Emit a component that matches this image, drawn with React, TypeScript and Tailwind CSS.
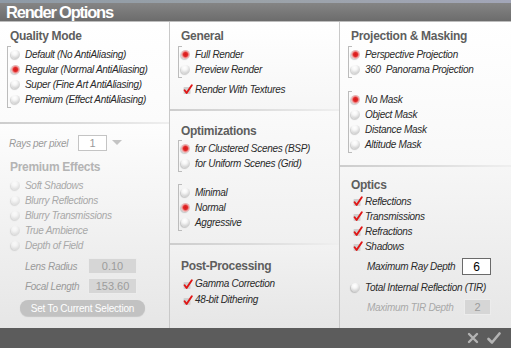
import React from "react";

const FONT = "font-['Liberation_Sans','Arial',sans-serif]";

function Radio({ on, dim }: { on?: boolean; dim?: boolean }) {
  return (
    <span
      className={`inline-block w-[9px] h-[9px] rounded-full shrink-0 shadow-[-1px_1px_1px_rgba(0,0,0,0.18)] ${
        on
          ? "bg-[radial-gradient(circle_at_50%_50%,#d81818_0,#e02828_32%,#f0a8a8_55%,#cfcfcf_85%,#b0b0b0_100%)]"
          : "bg-[radial-gradient(circle_at_40%_30%,#ffffff_0,#f6f6f6_30%,#c8c8c8_80%,#a8a8a8_100%)]"
      } ${dim ? "opacity-60" : ""}`}
    />
  );
}

function Check() {
  return (
    <svg width="10" height="11" viewBox="0 0 10 11" className="shrink-0">
      <rect x="0.5" y="3" width="7" height="7" rx="1" fill="#cfcfcf" />
      <path d="M1.6 6.3 L3.6 9 L8.8 1.2" stroke="#e01616" strokeWidth="1.9" fill="none" strokeLinecap="round" strokeLinejoin="round" />
    </svg>
  );
}

function Item({ children, on, check, dim, h = "h-[15px]" }: { children: React.ReactNode; on?: boolean; check?: boolean; dim?: boolean; h?: string }) {
  return (
    <div className={`flex items-center ${h} ${check ? "gap-[2px]" : "gap-[5px]"}`}>
      {check ? <Check /> : <Radio on={on} dim={dim} />}
      <span className={`italic text-[10px] tracking-[-0.3px] whitespace-nowrap leading-none ${dim ? "text-[#a8a8a8]" : "text-[#2a2a2a]"}`}>{children}</span>
    </div>
  );
}

function Group({ children, className = "" }: { children: React.ReactNode; className?: string }) {
  return (
    <div className={`relative border-l border-[#bcbcbc] py-[1px] pl-[2px] ${className}`}>
      <span className="absolute left-0 top-0 w-[3px] h-px bg-[#bcbcbc]" />
      <span className="absolute left-0 bottom-0 w-[3px] h-px bg-[#bcbcbc]" />
      {children}
    </div>
  );
}

function Heading({ children, dim, className = "" }: { children: React.ReactNode; dim?: boolean; className?: string }) {
  return (
    <div className={`h-[16px] leading-[16px] font-bold text-[12px] tracking-[-0.3px] whitespace-nowrap ${dim ? "text-[#b4b4b4]" : "text-[#5e5e5e]"} ${className}`}>
      {children}
    </div>
  );
}

function Sep() {
  return <div className="h-[2px] bg-linear-to-r from-[#cdcdcd] via-[#dcdcdc] to-transparent" />;
}

export default function App() {
  return (
    <div className={`${FONT} w-[511px] h-[348px] flex flex-col overflow-hidden bg-[#efefef]`}>
      {/* Title bar */}
      <div className="h-[22px] flex flex-col shrink-0">
        <div className="h-[3px] bg-linear-to-r from-[#8e9aa6] via-[#9ba2a8] to-[#a2a6b8]" />
        <div className="flex-1 flex items-center pl-[6px] bg-linear-to-b from-[#858585] to-[#6c6c6c] border-b border-[#bdbdbd]">
          <span className="text-white font-bold text-[16.5px] tracking-[-1.2px] leading-none">Render Options</span>
        </div>
      </div>

      {/* Body */}
      <div className="flex-1 flex min-h-0">
        {/* Left column */}
        <div className="w-[169px] flex flex-col shrink-0">
          <div className="h-[100px] pt-[6px] bg-linear-to-b from-white to-[#fbfbfb]">
            <Heading className="pl-[10px]">Quality Mode</Heading>
            <Group className="mt-[2px] ml-[7px] pl-[3px]">
              <Item>Default (No AntiAliasing)</Item>
              <Item on>Regular (Normal AntiAliasing)</Item>
              <Item>Super (Fine Art AntiAliasing)</Item>
              <Item>Premium (Effect AntiAliasing)</Item>
            </Group>
          </div>
          <Sep />
          <div className="flex-1 bg-linear-to-b from-[#fdfdfd] to-[#e6e6e6]">
            <div className="mt-[11px] h-[16px] flex items-center pl-[9px]">
              <span className="italic text-[10px] tracking-[-0.3px] text-[#9a9a9a] w-[69px]">Rays per pixel</span>
              <div className="w-[29px] h-[16px] bg-white border border-[#c4c4c4] flex items-center justify-center text-[11px] text-[#9a9a9a]">1</div>
              <svg width="10" height="6" viewBox="0 0 10 6" className="ml-[5px]">
                <path d="M0 0 L10 0 L5 5 Z" fill="#c4c4c4" />
              </svg>
            </div>
            <Heading dim className="pl-[10px] mt-[8px]">Premium Effects</Heading>
            <div className="mt-[3px] pl-[11px]">
              <Item dim>Soft Shadows</Item>
              <Item dim>Blurry Reflections</Item>
              <Item dim>Blurry Transmissions</Item>
              <Item dim>True Ambience</Item>
              <Item dim>Depth of Field</Item>
            </div>
            <div className="mt-[5px] h-[16px] flex items-center pl-[25px]">
              <span className="italic text-[10px] tracking-[-0.3px] text-[#9a9a9a] w-[63px]">Lens Radius</span>
              <div className="w-[49px] h-[16px] bg-[#d6d6d6] border border-[#ececec] flex items-center justify-center text-[11px] text-[#9c9c9c]">0.10</div>
            </div>
            <div className="mt-[4px] h-[16px] flex items-center pl-[25px]">
              <span className="italic text-[10px] tracking-[-0.3px] text-[#9a9a9a] w-[63px]">Focal Length</span>
              <div className="w-[49px] h-[16px] bg-[#d6d6d6] border border-[#ececec] flex items-center justify-center text-[11px] text-[#9c9c9c]">153.60</div>
            </div>
            <div className="mt-[6px] ml-[20px] w-[125px] h-[16px] rounded-[8px] bg-[#c2c2c2] shadow-[0_1px_1px_rgba(0,0,0,0.15)] flex items-center justify-center text-[10px] tracking-[-0.2px] text-white whitespace-nowrap">
              Set To Current Selection
            </div>
          </div>
        </div>

        {/* Middle column */}
        <div className="w-[170px] flex flex-col shrink-0 border-l border-[#c9c9c9]">
          <div className="h-[87px] pt-[6px] bg-linear-to-b from-white to-[#f6f6f6]">
            <Heading className="pl-[11px]">General</Heading>
            <Group className="mt-[2px] ml-[8px] w-[20px]">
              <Item on>Full Render</Item>
              <Item>Preview Render</Item>
            </Group>
            <div className="mt-[4px] pl-[13px]">
              <Item check>Render With Textures</Item>
            </div>
          </div>
          <Sep />
          <div className="h-[132px] pt-[12px] bg-linear-to-b from-[#fafafa] to-[#f0f0f0]">
            <Heading className="pl-[11px]">Optimizations</Heading>
            <Group className="mt-[1px] ml-[8px] w-[20px]">
              <Item on>for Clustered Scenes (BSP)</Item>
              <Item>for Uniform Scenes (Grid)</Item>
            </Group>
            <Group className="mt-[12px] ml-[8px] w-[20px]">
              <Item>Minimal</Item>
              <Item on>Normal</Item>
              <Item>Aggressive</Item>
            </Group>
          </div>
          <Sep />
          <div className="flex-1 pt-[13px] bg-linear-to-b from-[#f2f2f2] to-[#e6e6e6]">
            <Heading className="pl-[11px]">Post-Processing</Heading>
            <div className="mt-[2px] pl-[13px]">
              <Item check h="h-[16px]">Gamma Correction</Item>
              <Item check h="h-[16px]">48-bit Dithering</Item>
            </div>
          </div>
        </div>

        {/* Right column */}
        <div className="flex-1 flex flex-col border-l border-[#c9c9c9]">
          <div className="h-[143px] pt-[6px] bg-linear-to-b from-white to-[#f8f8f8]">
            <Heading className="pl-[11px]">Projection &amp; Masking</Heading>
            <Group className="mt-[2px] ml-[8px] w-[20px]">
              <Item on>Perspective Projection</Item>
              <Item>360&nbsp; Panorama Projection</Item>
            </Group>
            <Group className="mt-[13px] ml-[8px] w-[20px]">
              <Item on>No Mask</Item>
              <Item>Object Mask</Item>
              <Item>Distance Mask</Item>
              <Item>Altitude Mask</Item>
            </Group>
          </div>
          <Sep />
          <div className="flex-1 pt-[10px] bg-linear-to-b from-[#f6f6f6] to-[#e6e6e6]">
            <Heading className="pl-[11px]">Optics</Heading>
            <div className="mt-[1px] pl-[13px]">
              <Item check>Reflections</Item>
              <Item check>Transmissions</Item>
              <Item check>Refractions</Item>
              <Item check>Shadows</Item>
            </div>
            <div className="mt-[4px] h-[17px] flex items-center pl-[27px]">
              <span className="italic text-[10px] tracking-[-0.3px] text-[#2a2a2a] w-[95px] whitespace-nowrap">Maximum Ray Depth</span>
              <div className="w-[29px] h-[17px] bg-white border border-[#6a6a6a] flex items-center justify-center text-[12px] text-black">6</div>
            </div>
            <div className="mt-[5px] pl-[11px]">
              <Item>Total Internal Reflection (TIR)</Item>
            </div>
            <div className="mt-[4px] h-[16px] flex items-center pl-[27px]">
              <span className="italic text-[10px] tracking-[-0.3px] text-[#a8a8a8] w-[97px] whitespace-nowrap">Maximum TIR Depth</span>
              <div className="w-[27px] h-[16px] bg-[#d6d6d6] border border-[#ececec] flex items-center justify-center text-[11px] text-[#9c9c9c]">2</div>
            </div>
          </div>
        </div>
      </div>

      {/* Bottom bar */}
      <div className="h-[20px] shrink-0 bg-[#5c5c5c] flex items-center justify-end gap-[8px] pr-[10px]">
        <svg width="12" height="12" viewBox="0 0 12 12">
          <path d="M2 2 L10 10 M10 2 L2 10" stroke="#b4b4b4" strokeWidth="2.4" strokeLinecap="round" />
        </svg>
        <svg width="14" height="12" viewBox="0 0 14 12">
          <path d="M1.5 7 L5 10.5 L12.5 1.5" stroke="#b4b4b4" strokeWidth="2.6" fill="none" strokeLinecap="round" strokeLinejoin="round" />
        </svg>
      </div>
    </div>
  );
}
